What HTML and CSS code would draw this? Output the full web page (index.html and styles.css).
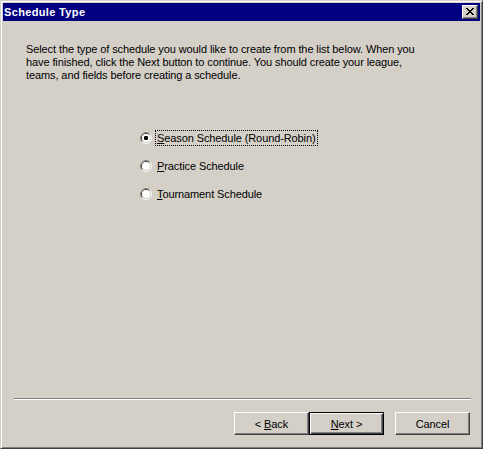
FILE: index.html
```html
<!DOCTYPE html>
<html lang="en">
<head>
    <meta charset="UTF-8">
    <title>Schedule Type</title>
    <link rel="stylesheet" href="styles.css">
</head>
<body>
    <div class="window">
        <div class="titlebar">
            <span class="title">Schedule Type</span>
            <span class="close">
                <svg width="8" height="7" viewBox="0 0 8 7"><path d="M0 0h2v1H0zM6 0h2v1H6zM1 1h2v1H1zM5 1h2v1H5zM2 2h4v1H2zM3 3h2v1H3zM2 4h4v1H2zM1 5h2v1H1zM5 5h2v1H5zM0 6h2v1H0zM6 6h2v1H6z" fill="#000"/></svg>
            </span>
        </div>

        <div class="client">
            <p class="intro">
                Select the type of schedule you would like to create from the list below. When you<br>
                have finished, click the Next button to continue. You should create your league,<br>
                teams, and fields before creating a schedule.
            </p>

            <div class="options">
                <div class="option">
                    <svg class="radio" width="12" height="12" viewBox="0 0 12 12">
                        <path d="M2.11 9.89A5.5 5.5 0 0 1 9.89 2.11" stroke="#808080" fill="none"/>
                        <path d="M9.89 2.11A5.5 5.5 0 0 1 2.11 9.89" stroke="#fff" fill="none"/>
                        <path d="M2.82 9.18A4.5 4.5 0 0 1 9.18 2.82" stroke="#404040" fill="none"/>
                        <path d="M9.18 2.82A4.5 4.5 0 0 1 2.82 9.18" stroke="#d4d0c8" fill="none"/>
                        <circle cx="6" cy="6" r="4" fill="#fff"/>
                        <rect x="4" y="4" width="4" height="4" rx="1.2" fill="#000"/>
                    </svg>
                    <span class="label focus"><u>S</u>eason Schedule (Round-Robin)</span>
                </div>
                <div class="option">
                    <svg class="radio" width="12" height="12" viewBox="0 0 12 12">
                        <path d="M2.11 9.89A5.5 5.5 0 0 1 9.89 2.11" stroke="#808080" fill="none"/>
                        <path d="M9.89 2.11A5.5 5.5 0 0 1 2.11 9.89" stroke="#fff" fill="none"/>
                        <path d="M2.82 9.18A4.5 4.5 0 0 1 9.18 2.82" stroke="#404040" fill="none"/>
                        <path d="M9.18 2.82A4.5 4.5 0 0 1 2.82 9.18" stroke="#d4d0c8" fill="none"/>
                        <circle cx="6" cy="6" r="4" fill="#fff"/>
                    </svg>
                    <span class="label"><u>P</u>ractice Schedule</span>
                </div>
                <div class="option">
                    <svg class="radio" width="12" height="12" viewBox="0 0 12 12">
                        <path d="M2.11 9.89A5.5 5.5 0 0 1 9.89 2.11" stroke="#808080" fill="none"/>
                        <path d="M9.89 2.11A5.5 5.5 0 0 1 2.11 9.89" stroke="#fff" fill="none"/>
                        <path d="M2.82 9.18A4.5 4.5 0 0 1 9.18 2.82" stroke="#404040" fill="none"/>
                        <path d="M9.18 2.82A4.5 4.5 0 0 1 2.82 9.18" stroke="#d4d0c8" fill="none"/>
                        <circle cx="6" cy="6" r="4" fill="#fff"/>
                    </svg>
                    <span class="label"><u>T</u>ournament Schedule</span>
                </div>
            </div>

            <div class="separator"></div>

            <div class="buttons">
                <span class="btn"><span>&lt; <u>B</u>ack</span></span>
                <span class="btn default"><span><u>N</u>ext &gt;</span></span>
                <span class="btn cancel"><span>Cancel</span></span>
            </div>
        </div>
    </div>
</body>
</html>
```

FILE: styles.css
```css
body {
    margin: 0;
    background-color: #d4d0c8;
    font-family: "Liberation Sans", Arial, sans-serif;
    font-size: 11px;
    letter-spacing: -0.1px;
    color: #000;
}
.window {
    width: 483px;
    height: 449px;
    box-sizing: border-box;
    background-color: #d4d0c8;
    border: 1px solid;
    border-color: #d4d0c8 #404040 #404040 #d4d0c8;
    box-shadow: inset 1px 1px #fff, inset -1px -1px #808080;
    padding: 2px;
    display: flex;
    flex-direction: column;
}
.titlebar {
    height: 18px;
    background-color: #000080;
    color: #fff;
    display: flex;
    align-items: center;
    justify-content: space-between;
    padding: 0 2px 0 1px;
    margin-bottom: 1px;
}
.title {
    font-weight: bold;
    font-size: 11px;
    letter-spacing: 0.35px;
}
.close {
    width: 16px;
    height: 14px;
    box-sizing: border-box;
    background-color: #d4d0c8;
    border: 1px solid;
    border-color: #fff #404040 #404040 #fff;
    box-shadow: inset -1px -1px #808080;
    display: flex;
    align-items: center;
    justify-content: center;
    padding: 0 1px 1px 0;
}
.client {
    flex: 1;
    display: flex;
    flex-direction: column;
}
.intro {
    margin: 21px 0 0 23px;
    line-height: 13px;
}
.options {
    margin: 48px 0 0 137px;
    display: flex;
    flex-direction: column;
    gap: 12px;
}
.option {
    display: flex;
    align-items: center;
    height: 16px;
}
.radio {
    margin-right: 3px;
}
.label {
    border: 1px dotted transparent;
    padding: 0 1px;
    line-height: 14px;
}
.label.focus {
    border-color: #000;
}
.separator {
    margin: auto 9px 0 11px;
    height: 1px;
    background-color: #808080;
    border-bottom: 1px solid #fff;
}
.buttons {
    display: flex;
    justify-content: flex-end;
    margin: 12px 10px 11px 0;
}
.btn {
    width: 75px;
    height: 23px;
    box-sizing: border-box;
    border: 1px solid;
    border-color: #fff #404040 #404040 #fff;
    box-shadow: inset -1px -1px #808080;
    display: flex;
    align-items: center;
    justify-content: center;
}
.btn.default {
    border-color: #000;
    box-shadow: inset 1px 1px #fff, inset -1px -1px #404040, inset -2px -2px #808080;
}
.btn.cancel {
    margin-left: 11px;
}
```
